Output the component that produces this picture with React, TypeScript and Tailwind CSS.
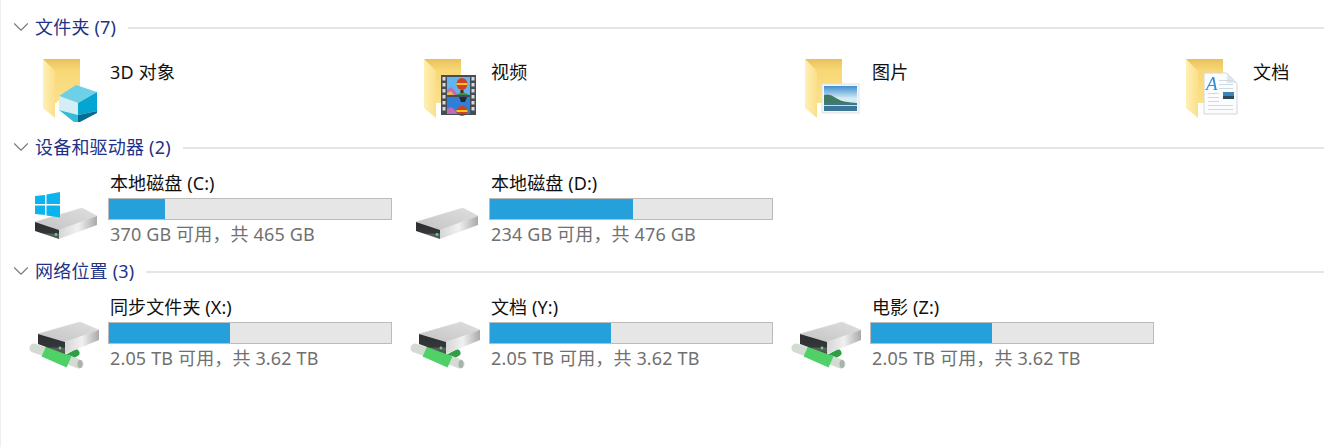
import { ReactNode } from "react"
import { ChevronDown } from "lucide-react"

const FONT = "font-['Noto_Sans','Noto_Sans_CJK_SC',sans-serif]"
const ICON_CLASS = "blur-[0.35px]"

function FolderBase() {
	return (
		<>
			<defs>
				<linearGradient id="folderBack" x1="0" y1="0" x2="0" y2="1">
					<stop offset="0" stopColor="#e8c15f" />
					<stop offset="0.25" stopColor="#f8d775" />
					<stop offset="1" stopColor="#fbe08d" />
				</linearGradient>
				<linearGradient id="folderLeaf" x1="0" y1="0" x2="1" y2="0">
					<stop offset="0" stopColor="#fff0b5" />
					<stop offset="1" stopColor="#fbdf8a" />
				</linearGradient>
			</defs>
			<path d="M15 20H52V64H27Z" fill="url(#folderBack)" />
			<path d="M15 20L27 32V79L15 69Z" fill="url(#folderLeaf)" />
		</>
	)
}

function CubeIcon() {
	return (
		<svg width="80" height="96" className={ICON_CLASS}>
			<FolderBase />
			<path d="M29 62H33V78H29Z" fill="#fff" />
			<path d="M31 57L48 46L69 53L50 64Z" fill="#6ed0e6" />
			<path d="M31 57L50 64V76L31 71Z" fill="#d3eef5" />
			<path d="M50 64L69 53V72L50 76Z" fill="#05a5d2" />
			<path d="M31 71L50 76V83L46 83Z" fill="#35bcd4" />
			<path d="M50 76L69 72V74L52 83H50Z" fill="#056c93" />
		</svg>
	)
}

function FilmIcon() {
	return (
		<svg width="80" height="96" className={ICON_CLASS}>
			<FolderBase />
			<rect x="32" y="36" width="35" height="40" fill="#474c55" />
			{[38, 44, 50, 56, 62, 68].map((y) => (
				<g key={y}>
					<rect x="33.5" y={y} width="3" height="3.5" fill="#d8dadb" />
					<rect x="62.5" y={y} width="3" height="3.5" fill="#d8dadb" />
				</g>
			))}
			<rect x="38" y="38" width="23" height="18" fill="#63b4ee" />
			<rect x="38" y="58" width="23" height="17" fill="#2f7fd6" />
			<path d="M38 56V51L42 48L46 52L49 56Z" fill="#c46ab0" />
			<path d="M38 54L42 52L45 56H38Z" fill="#e8b84a" />
			<path d="M47 56L53 53L61 56Z" fill="#3f8f4f" />
			<ellipse cx="53" cy="45" rx="5.5" ry="6" fill="#d2401f" />
			<rect x="47.5" y="44" width="11" height="2" fill="#f5c518" />
			<rect x="51.5" y="51" width="3" height="3" fill="#4f2c14" />
			<path d="M50 58H58L56 63H52Z" fill="#1f2a35" />
			<path d="M38 73V70L42 68L46 71L48 75H38Z" fill="#c46ab0" />
			<ellipse cx="53" cy="72" rx="5.5" ry="5" fill="#d2401f" />
			<rect x="47.5" y="71" width="11" height="2" fill="#f5c518" />
			<rect x="38" y="75" width="23" height="1" fill="#474c55" />
		</svg>
	)
}

function PhotoIcon() {
	return (
		<svg width="80" height="96" className={ICON_CLASS}>
			<defs>
				<linearGradient id="sky" x1="0" y1="0" x2="0" y2="1">
					<stop offset="0" stopColor="#3f8fd0" />
					<stop offset="0.5" stopColor="#d6ecf5" />
					<stop offset="1" stopColor="#d6ecf5" />
				</linearGradient>
			</defs>
			<FolderBase />
			<rect x="32" y="45" width="37" height="29" fill="#f4f6f8" stroke="#dde2e6" />
			<rect x="34" y="47" width="33" height="25" fill="url(#sky)" />
			<path d="M34 56C40 54 44 58 48 60C52 63 58 63 67 64V66H34Z" fill="#3f7a63" />
			<path d="M34 64H67V72H34Z" fill="#3d7696" />
			<path d="M34 66H67V67H34Z" fill="#c4dde8" />
		</svg>
	)
}

function DocIcon() {
	return (
		<svg width="80" height="96" className={ICON_CLASS}>
			<FolderBase />
			<path d="M33 34H56L66 44V75H33Z" fill="#fafcfe" stroke="#d4d8dc" />
			<path d="M56 34V44H66Z" fill="#dfe6ec" />
			<text x="35" y="51" fontFamily="Liberation Serif, serif" fontStyle="italic" fontSize="19" fill="#2f8fd6">
				A
			</text>
			{[41, 45, 49].map((y) => (
				<rect key={y} x="48" y={y} width="14" height="1" fill="#cfd9e2" />
			))}
			{[54, 58, 62, 66, 70].map((y) => (
				<rect key={y} x="37" y={y} width={y < 66 ? 11 : 25} height="1" fill="#cfd9e2" />
			))}
			<rect x="52" y="53" width="11" height="7" fill="#3e84b8" />
			<rect x="52" y="57" width="11" height="3" fill="#2b4a5c" />
		</svg>
	)
}

function DiskDefs() {
	return (
		<defs>
			<linearGradient id="diskTop" x1="0" y1="1" x2="1" y2="0">
				<stop offset="0" stopColor="#c4c4c4" />
				<stop offset="1" stopColor="#dedede" />
			</linearGradient>
			<linearGradient id="diskSide" x1="0" y1="0" x2="1" y2="0">
				<stop offset="0" stopColor="#d6d6d6" />
				<stop offset="0.5" stopColor="#f1f1f1" />
				<stop offset="1" stopColor="#a9a9a9" />
			</linearGradient>
			<linearGradient id="diskFront" x1="0" y1="0" x2="0" y2="1">
				<stop offset="0" stopColor="#2c2e2f" />
				<stop offset="0.65" stopColor="#34373a" />
				<stop offset="0.72" stopColor="#5c605f" />
				<stop offset="1" stopColor="#4a4e4d" />
			</linearGradient>
		</defs>
	)
}

function LocalDisk({ system }: { system?: boolean }) {
	return (
		<svg width="80" height="100" className={ICON_CLASS}>
			<DiskDefs />
			<g transform="translate(7 49)" strokeLinejoin="round">
				<path d="M0 14L47 0L62 8L24 22Z" fill="url(#diskTop)" stroke="url(#diskTop)" strokeWidth="0.6" />
				<path d="M24 22L62 8V17L24 31Z" fill="url(#diskSide)" />
				<path d="M0 14L24 22V31L0 23Z" fill="url(#diskFront)" />
				<circle cx="21" cy="26.5" r="1.4" fill="#57d873" />
			</g>
			{system && (
				<g fill="#0cb4ee">
					<path d="M7 37L17 36V45H7Z" />
					<path d="M18.5 35.5L32 33V45H18.5Z" />
					<path d="M7 46.5H17V56L7 55Z" />
					<path d="M18.5 46.5H32V58.5L18.5 56.5Z" />
				</g>
			)}
		</svg>
	)
}

function NetworkDisk() {
	return (
		<svg width="80" height="100" className={ICON_CLASS}>
			<DiskDefs />
			<g fill="none" strokeLinecap="round">
				<path d="M37 76L48 70" stroke="#2f9e45" strokeWidth="7" />
				<path d="M6 65L17 69" stroke="#d3dbd3" strokeWidth="9" />
				<path d="M41 77L51 81" stroke="#d3dbd3" strokeWidth="9" />
				<path d="M16 68L41 79" stroke="#4fd168" strokeWidth="12" strokeLinecap="butt" />
			</g>
			<ellipse cx="52" cy="81" rx="2.5" ry="4" fill="#a9b3a9" />
			<g transform="translate(10 39)" strokeLinejoin="round">
				<path d="M0 12L42 0L61 8L27 20Z" fill="url(#diskTop)" stroke="url(#diskTop)" strokeWidth="0.6" />
				<path d="M27 20L61 8V18L27 32Z" fill="url(#diskSide)" />
				<path d="M0 12L27 20V32L0 22Z" fill="url(#diskFront)" />
				<circle cx="22" cy="26" r="1.4" fill="#57d873" />
			</g>
		</svg>
	)
}

function Section({ title, children }: { title: string; children: ReactNode }) {
	return (
		<section>
			<div className="flex h-6 items-center">
				<ChevronDown className="ml-[8px] h-[26px] w-[26px] text-[#7b7b7b]" strokeWidth={1} />
				<h2 className="ml-px text-[18px] leading-6 tracking-[0.2px] whitespace-nowrap text-[#1e3287]">{title}</h2>
				<div className="mt-[2px] ml-[12px] h-[2px] flex-1 bg-[#e5e5e5]" />
			</div>
			<div className="grid grid-cols-[381px_381px_381px_1fr] pl-[28px]">{children}</div>
		</section>
	)
}

function FolderItem({ icon, name }: { icon: ReactNode; name: string }) {
	return (
		<div className="flex h-[96px]">
			<div className="w-[80px] shrink-0">{icon}</div>
			<div className="pt-[21px] pl-[2px] text-[18px] leading-6 tracking-[0.2px] whitespace-nowrap text-[#111111]">{name}</div>
		</div>
	)
}

function DriveItem({ icon, name, used, info }: { icon: ReactNode; name: string; used: number; info: string }) {
	return (
		<div className="flex h-[100px]">
			<div className="w-[80px] shrink-0">{icon}</div>
			<div className="w-[284px] pt-[12px]">
				<div className="pl-[2px] text-[18px] leading-6 tracking-[0.1px] whitespace-nowrap text-[#111111]">{name}</div>
				<div className="mt-[3px] h-[22px] border border-[#bcbcbc] bg-[#e6e6e6]">
					<div className="h-full bg-[#26a0da]" style={{ width: used }} />
				</div>
				<div className="mt-[2px] pl-[2px] text-[18px] leading-6 tracking-[0.15px] whitespace-nowrap text-[#707070]">{info}</div>
			</div>
		</div>
	)
}

export default function App() {
	return (
		<div className={`h-[447px] w-[1324px] overflow-hidden bg-white pt-[15px] shadow-[inset_1px_0_0_#eeeeee] ${FONT}`}>
			<Section title="文件夹 (7)">
				<FolderItem icon={<CubeIcon />} name="3D 对象" />
				<FolderItem icon={<FilmIcon />} name="视频" />
				<FolderItem icon={<PhotoIcon />} name="图片" />
				<FolderItem icon={<DocIcon />} name="文档" />
			</Section>
			<Section title="设备和驱动器 (2)">
				<DriveItem icon={<LocalDisk system />} name="本地磁盘 (C:)" used={56} info="370 GB 可用，共 465 GB" />
				<DriveItem icon={<LocalDisk />} name="本地磁盘 (D:)" used={143} info="234 GB 可用，共 476 GB" />
			</Section>
			<Section title="网络位置 (3)">
				<DriveItem icon={<NetworkDisk />} name="同步文件夹 (X:)" used={121} info="2.05 TB 可用，共 3.62 TB" />
				<DriveItem icon={<NetworkDisk />} name="文档 (Y:)" used={121} info="2.05 TB 可用，共 3.62 TB" />
				<DriveItem icon={<NetworkDisk />} name="电影 (Z:)" used={121} info="2.05 TB 可用，共 3.62 TB" />
			</Section>
		</div>
	)
}
